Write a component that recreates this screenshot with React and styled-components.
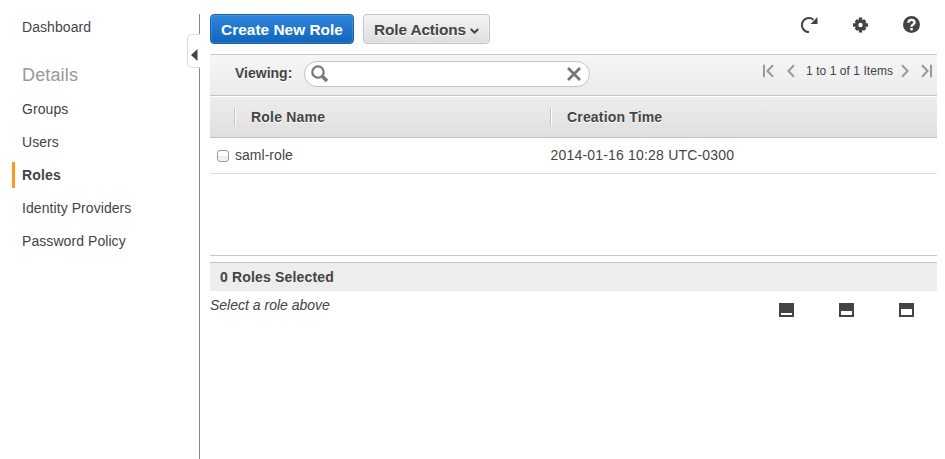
import React from "react";
import styled, { createGlobalStyle } from "styled-components";

const GlobalStyle = createGlobalStyle`
  * { box-sizing: border-box; }
  body {
    margin: 0;
    background: #fff;
    color: #444;
    font: 14px/18px "Liberation Sans", Arial, sans-serif;
    overflow: hidden;
  }
`;

const Page = styled.div`
  display: flex;
  width: 945px;
  height: 459px;
  padding-top: 14px;
`;

const Sidebar = styled.nav`
  position: relative;
  width: 200px;
  flex: none;
  border-right: 1px solid #888;
  padding-left: 12px;
`;

const NavItem = styled.div`
  height: 26px;
  margin-bottom: 7px;
  padding-left: ${(p) => (p.$active ? 7 : 10)}px;
  border-left: ${(p) => (p.$active ? "3px solid #f7981f" : "none")};
  font-weight: ${(p) => (p.$active ? 700 : 400)};
  letter-spacing: ${(p) => (p.$active ? 0.15 : 0.07)}px;
  line-height: 26px;
  white-space: nowrap;
`;

const NavHeading = styled.div`
  margin: 22px 0 8px;
  padding-left: 10px;
  font-size: 18px;
  line-height: 26px;
  letter-spacing: 0.15px;
  color: #999;
`;

const CollapseTab = styled.button`
  position: absolute;
  top: 20px;
  right: -1px;
  width: 13px;
  height: 34px;
  display: flex;
  align-items: center;
  justify-content: flex-start;
  padding: 8px 0 0 3px;
  background: #fff;
  border: 1px solid #ddd;
  border-right: 0;
  border-radius: 5px 0 0 5px;
`;

const Main = styled.main`
  width: 727px;
  margin-left: 10px;
`;

const ActionBar = styled.div`
  display: flex;
  height: 40px;
`;

const Button = styled.button`
  display: flex;
  align-items: center;
  justify-content: center;
  width: ${(p) => (p.$primary ? 144 : 127)}px;
  height: 30px;
  margin-right: 9px;
  padding: 2px 0 0;
  border: 1px solid ${(p) => (p.$primary ? "#1a62b0" : "#c2c2c2")};
  border-radius: 4px;
  background: ${(p) =>
    p.$primary
      ? "linear-gradient(#2f86dc, #1166bb)"
      : "linear-gradient(#f3f3f3, #dedede)"};
  box-shadow: inset 0 0 0 1px
    ${(p) => (p.$primary ? "rgba(255,255,255,.13)" : "rgba(255,255,255,.3)")};
  color: ${(p) => (p.$primary ? "#fff" : "#444")};
  text-shadow: ${(p) => (p.$primary ? "none" : "0 1px 0 #fff")};
  font: bold 15.4px/18px "Liberation Sans", Arial, sans-serif;
  letter-spacing: ${(p) => p.$spacing}px;
  white-space: nowrap;

  svg { margin: 2px 0 0 4px; }
`;

const Tools = styled.div`
  display: flex;
  gap: 33px;
  margin: 2px 16px 0 auto;
  height: 18px;
  svg { display: block; }
`;

const FilterBar = styled.div`
  display: flex;
  align-items: center;
  height: 42px;
  padding: 0 5px 1px 25px;
  border-top: 1px solid #c9c9c9;
  border-bottom: 1px solid #c4c4c4;
  background: linear-gradient(#f6f6f6, #ebebeb);
`;

const FilterLabel = styled.label`
  width: 69px;
  padding-bottom: 4px;
  font-weight: 700;
  letter-spacing: 0;
  text-shadow: 0 1px 0 #fff;
`;

const SearchBox = styled.div`
  display: flex;
  align-items: center;
  justify-content: space-between;
  width: 286px;
  height: 26px;
  margin-bottom: 1px;
  padding: 0 8px 0 6px;
  border: 1px solid #c4c4c4;
  border-radius: 13px;
  background: #fff;
`;

const Pager = styled.div`
  display: flex;
  align-items: center;
  margin-left: auto;
  height: 18px;
  margin-bottom: 8px;
  svg { display: block; }
`;

const PagerText = styled.span`
  width: 88px;
  margin: 0 7px 0 11px;
  font-size: 12px;
  letter-spacing: ${(p) => p.$spacing}px;
  white-space: nowrap;
`;

const Gap = styled.span`
  width: ${(p) => p.$w}px;
`;

const HeaderRow = styled.div`
  display: grid;
  grid-template-columns: 24px 316px 1fr;
  align-items: center;
  height: 42px;
  border-top: 1px solid #fff;
  border-bottom: 1px solid #c2c2c2;
  background: linear-gradient(#ededed, #dfdfdf);
`;

const HeaderCell = styled.div`
  height: 18px;
  padding-left: 16px;
  border-left: 1px solid #c4c4c4;
  box-shadow: inset 1px 0 #fff;
  font-weight: 700;
  letter-spacing: ${(p) => p.$spacing}px;
  line-height: 19px;
  text-shadow: 0 1px 0 #fff;
`;

const TableBody = styled.div`
  height: 118px;
  border-bottom: 1px solid #c9c9c9;
`;

const Row = styled.div`
  display: grid;
  grid-template-columns: 25px 315.5px 1fr;
  align-items: center;
  height: 36px;
  border-bottom: 1px solid #ddd;
`;

const Cell = styled.div`
  letter-spacing: ${(p) => p.$spacing}px;
  padding-bottom: 1px;
`;

const Checkbox = styled.input`
  appearance: none;
  width: 12px;
  height: 12px;
  margin: 1px 0 0 7px;
  border: 1px solid #999;
  border-radius: 3px;
  background: linear-gradient(#fff 45%, #eaeaea 50%, #f6f6f6);
`;

const SelectionBar = styled.div`
  height: 29px;
  margin-top: 6px;
  padding-left: 10px;
  border-top: 1px solid #c6c6c6;
  background: #ededed;
  font-weight: 700;
  letter-spacing: ${(p) => p.$spacing}px;
  line-height: 28px;
`;

const DetailBar = styled.div`
  display: flex;
  justify-content: space-between;
  padding: 5px 23px 0 0;
`;

const Hint = styled.em`
  letter-spacing: ${(p) => p.$spacing}px;
`;

const PaneButtons = styled.div`
  display: flex;
  gap: 45px;
  padding-top: 7px;
`;

const PaneButton = styled.span`
  width: 15px;
  height: 14px;
  border: solid #444;
  border-width: ${(p) => p.$top}px 2px 2px;
`;

const Chevron = ({ right, end }) => (
  <svg width={end ? 11 : 8} height="14" viewBox={end ? "0 0 11 14" : "0 0 8 14"} fill="none" stroke="#999" strokeWidth="2">
    {right ? <path d="M1 1.2 6.6 7 1 12.8" /> : <path d={end ? "M10 1.2 4.4 7 10 12.8" : "M7 1.2 1.4 7 7 12.8"} />}
    {end && <path d={right ? "M10 .8V13.2" : "M1 .8V13.2"} />}
  </svg>
);

const RefreshIcon = () => (
  <svg width="18" height="18" viewBox="0 0 18 18">
    <path d="M8 16.1A7 7 0 1 1 12.5 3.8" fill="none" stroke="#444" strokeWidth="2" />
    <path d="M16.5 1V8H9.5Z" fill="#444" />
  </svg>
);

const GearIcon = () => (
  <svg width="18" height="18" viewBox="0 0 18 18">
    <g stroke="#444">
      <path d="M8.5 1.5V16.5M1 9H16" strokeWidth="3.4" />
      <path d="M3.8 4.3 13.2 13.7M13.2 4.3 3.8 13.7" strokeWidth="3.4" />
    </g>
    <circle cx="8.5" cy="9" r="5.5" fill="#444" />
    <circle cx="8.5" cy="9" r="2.2" fill="#fff" />
  </svg>
);

const HelpIcon = () => (
  <svg width="18" height="18" viewBox="0 0 18 18">
    <circle cx="8.5" cy="8.5" r="8.5" fill="#444" />
    <path d="M5.4 6.8C5.4 3 11.6 3 11.6 6.5 11.6 8.6 8.5 8.3 8.5 10.7" fill="none" stroke="#fff" strokeWidth="2.3" />
    <path d="M7.2 12H9.8V14.3H7.2Z" fill="#fff" />
  </svg>
);

export default function App() {
  return (
    <>
      <GlobalStyle />
      <Page>
        <Sidebar>
          <NavItem>Dashboard</NavItem>
          <NavHeading>Details</NavHeading>
          <NavItem>Groups</NavItem>
          <NavItem>Users</NavItem>
          <NavItem $active>Roles</NavItem>
          <NavItem>Identity Providers</NavItem>
          <NavItem>Password Policy</NavItem>
          <CollapseTab aria-label="Collapse">
            <svg width="7" height="12" viewBox="0 0 7 12"><path d="M0 6 6.5 0V12Z" fill="#444" /></svg>
          </CollapseTab>
        </Sidebar>
        <Main>
          <ActionBar>
            <Button $primary $spacing={0.02}>Create New Role</Button>
            <Button $spacing={-0.12}>
              Role Actions
              <svg width="9" height="7" viewBox="0 0 9 7"><path d="M.8 1 4.5 4.7 8.2 1" fill="none" stroke="#444" strokeWidth="2" /></svg>
            </Button>
            <Tools>
              <RefreshIcon />
              <GearIcon />
              <HelpIcon />
            </Tools>
          </ActionBar>
          <FilterBar>
            <FilterLabel>Viewing:</FilterLabel>
            <SearchBox>
              <svg width="18" height="18" viewBox="0 0 18 18" fill="none" stroke="#777">
                <circle cx="7" cy="7" r="5.7" strokeWidth="2.2" />
                <path d="M11 11 16 16" strokeWidth="3.6" />
              </svg>
              <svg width="14" height="14" viewBox="0 0 14 14"><path d="M1 1 13 13M13 1 1 13" stroke="#777" strokeWidth="2.8" /></svg>
            </SearchBox>
            <Pager>
              <Chevron end />
              <Gap $w={13} />
              <Chevron />
              <PagerText $spacing={0.06}>1 to 1 of 1 Items</PagerText>
              <Chevron right />
              <Gap $w={12} />
              <Chevron right end />
            </Pager>
          </FilterBar>
          <HeaderRow>
            <span />
            <HeaderCell $spacing={0.2}>Role Name</HeaderCell>
            <HeaderCell $spacing={0.17}>Creation Time</HeaderCell>
          </HeaderRow>
          <TableBody>
            <Row>
              <Checkbox type="checkbox" aria-label="saml-role" />
              <Cell $spacing={0.03}>saml-role</Cell>
              <Cell $spacing={0.19}>2014-01-16 10:28 UTC-0300</Cell>
            </Row>
          </TableBody>
          <SelectionBar $spacing={0.17}>0 Roles Selected</SelectionBar>
          <DetailBar>
            <Hint $spacing={0}>Select a role above</Hint>
            <PaneButtons>
              <PaneButton $top={10} />
              <PaneButton $top={8} />
              <PaneButton $top={6} />
            </PaneButtons>
          </DetailBar>
        </Main>
      </Page>
    </>
  );
}
